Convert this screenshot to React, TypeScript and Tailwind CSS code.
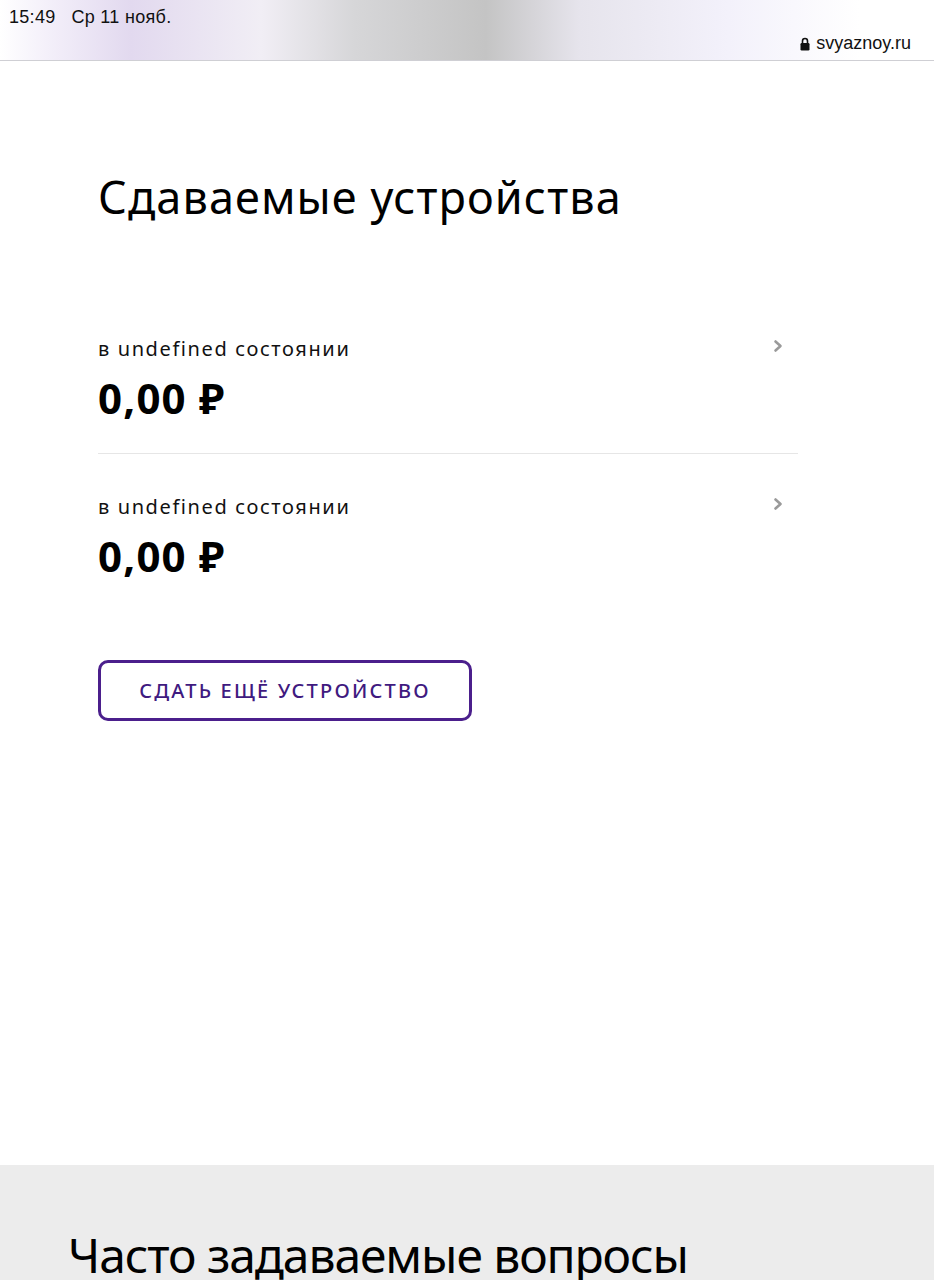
import React from "react";

function Chevron() {
  return (
    <svg width="12" height="14" viewBox="0 0 12 14" className="mt-[4px]">
      <path d="M3.5 2.5 L8.5 7 L3.5 11.5" fill="none" stroke="#9a9a9a" strokeWidth="2.6" strokeLinecap="round" strokeLinejoin="round" />
    </svg>
  );
}

function Item({ last }: { last?: boolean }) {
  return (
    <div className={"flex justify-between pr-[14px] " + (last ? "pb-[20px]" : "pb-[30px] border-b border-[#e6e6e6]")}>
      <div>
        <div className="text-[20px] leading-[28px] text-[#111] tracking-[1.6px]">в undefined состоянии</div>
        <div className="text-[42px] leading-[50px] font-bold text-black mt-[10px] tracking-[1.2px]">0,00 ₽</div>
      </div>
      <Chevron />
    </div>
  );
}

export default function App() {
  return (
    <div className="w-[934px] h-[1280px] overflow-hidden bg-white" style={{ fontFamily: '"Noto Sans", "Open Sans", sans-serif' }}>
      <div className="h-[61px] border-b border-[#cfcfd4] bg-[linear-gradient(90deg,#ffffff_0%,#f4f0fa_5%,#e2d9ef_14%,#f1eef5_28%,#d6d6d8_38%,#c4c4c4_52%,#e6e4ec_62%,#f3f1fb_78%,#ffffff_92%)] relative">
        <div className="absolute left-[9px] top-[4px] text-[18px] text-[#111] tracking-[0.3px]" style={{ fontFamily: '"Liberation Sans", Roboto, sans-serif' }}>
          15:49&nbsp;&nbsp;&nbsp;Ср 11 нояб.
        </div>
        <div className="absolute right-[23px] top-[30px] flex items-center gap-[6px] text-[18px] text-[#111]" style={{ fontFamily: '"Liberation Sans", Roboto, sans-serif' }}>
          <svg width="10" height="14" viewBox="0 0 10 14">
            <path d="M2.5 6 V4 a2.5 2.5 0 0 1 5 0 V6" fill="none" stroke="#111" strokeWidth="1.6" />
            <rect x="0.5" y="6" width="9" height="7.5" rx="1.2" fill="#111" />
          </svg>
          <span>svyaznoy.ru</span>
        </div>
      </div>

      <div className="h-[1104px] px-[98px] pt-[108px]">
        <h1 className="text-[45px] leading-[56px] font-normal text-black tracking-[1.1px]">Сдаваемые устройства</h1>
        <div className="w-[700px] mt-[110px] flex flex-col gap-[39px]">
          <Item />
          <Item last />
        </div>
        <button className="mt-[59px] w-[374px] h-[61px] border-[3px] border-[#4b1f8c] rounded-[10px] text-[20px] font-medium text-[#3f1a80] tracking-[2.2px]">
          СДАТЬ ЕЩЁ УСТРОЙСТВО
        </button>
      </div>

      <div className="bg-[#ececec] h-[200px] px-[68px] pt-[60px]">
        <h2 className="text-[48px] leading-[60px] font-normal text-black tracking-[-1.1px]">Часто задаваемые вопросы</h2>
      </div>
    </div>
  );
}
